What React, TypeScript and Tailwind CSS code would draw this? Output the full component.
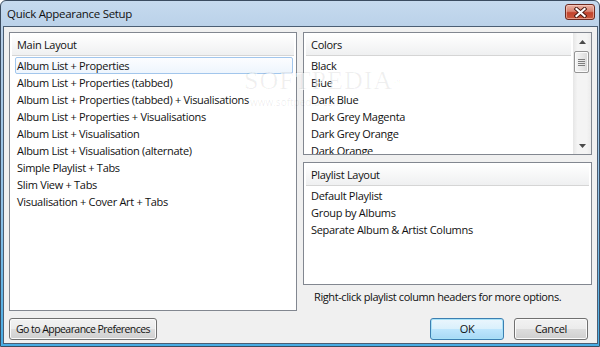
import React from "react";

const mainItems = [
  "Album List + Properties",
  "Album List + Properties (tabbed)",
  "Album List + Properties (tabbed) + Visualisations",
  "Album List + Properties + Visualisations",
  "Album List + Visualisation",
  "Album List + Visualisation (alternate)",
  "Simple Playlist + Tabs",
  "Slim View + Tabs",
  "Visualisation + Cover Art + Tabs",
];

const colorItems = [
  "Black",
  "Blue",
  "Dark Blue",
  "Dark Grey Magenta",
  "Dark Grey Orange",
  "Dark Orange",
];

const playlistItems = [
  "Default Playlist",
  "Group by Albums",
  "Separate Album & Artist Columns",
];

function Header({ label }: { label: string }) {
  return (
    <div className="mx-[2px] mt-[1px] h-[22px] shrink-0 border-b border-[#d5d5d5] bg-[linear-gradient(to_bottom,#ffffff,#eff0f1)] pl-[5px] pt-[1px] leading-[20px] text-[#111]">
      {label}
    </div>
  );
}

function Rows({ items, selected }: { items: string[]; selected?: number }) {
  return (
    <div className="mt-[1px] flex flex-col pl-[5px] pr-[3px]">
      {items.map((t, i) => (
        <div
          key={t}
          className={
            i === selected
              ? "h-[17px] shrink-0 whitespace-nowrap rounded-[2px] border border-[#a2c6ec] bg-[linear-gradient(to_bottom,#fcfdff,#eef5fd)] pl-[1px] pt-[1px] leading-[14px] text-[#111]"
              : "h-[17px] shrink-0 whitespace-nowrap rounded-[2px] border border-transparent pl-[1px] pt-[1px] leading-[14px] text-[#111]"
          }
        >
          {t}
        </div>
      ))}
    </div>
  );
}

function Scrollbar() {
  return (
    <div className="flex w-[18px] shrink-0 flex-col bg-[linear-gradient(to_right,#e6e6e6,#f4f4f4_25%,#f4f4f4_75%,#ececec)]">
      <div className="flex h-[17px] shrink-0 items-center justify-center">
        <svg width="7" height="4" viewBox="0 0 7 4">
          <path d="M3.5 0 L7 4 L0 4 Z" fill="#4a4a4a" />
        </svg>
      </div>
      <div className="ml-[1px] mt-[1px] flex h-[22px] w-[15px] shrink-0 flex-col items-center justify-center gap-[1px] rounded-[2px] border border-[#959595] bg-[linear-gradient(to_right,#f6f6f6,#e9e9e9_50%,#d9d9d9)] shadow-[inset_0_0_0_1px_#fbfbfb]">
        <div className="h-[1px] w-[7px] bg-[#7e7e7e]" />
        <div className="h-[1px] w-[7px] bg-[#7e7e7e]" />
        <div className="h-[1px] w-[7px] bg-[#7e7e7e]" />
        <div className="h-[1px] w-[7px] bg-[#7e7e7e]" />
      </div>
      <div className="flex-1" />
      <div className="flex h-[17px] shrink-0 items-center justify-center">
        <svg width="7" height="4" viewBox="0 0 7 4">
          <path d="M0 0 L7 0 L3.5 4 Z" fill="#4a4a4a" />
        </svg>
      </div>
    </div>
  );
}

const btnGray =
  "h-[22px] whitespace-nowrap rounded-[3px] border border-[#707070] bg-[linear-gradient(to_bottom,#f2f2f2_0%,#ebebeb_50%,#dddddd_50%,#cfcfcf_100%)] leading-[18px] text-[#111] shadow-[inset_0_0_0_1px_#fbfbfb]";

export default function App() {
  return (
    <div className="flex h-[347px] w-[600px] flex-col overflow-hidden rounded-t-[6px] border border-[#3b4c60] bg-[linear-gradient(to_bottom,#c6daee_0%,#b3cce6_12%,#8fc0e6_60%,#47ace4_100%)] pb-[2px] pl-[2px] pr-[1px] font-['Open_Sans',sans-serif] text-[11px] tracking-[-0.3px]">
      {/* Title bar */}
      <div className="flex h-[25px] shrink-0 items-start justify-between">
        <div className="whitespace-nowrap pl-[4px] pt-[5px] text-[11.5px] leading-[16px] text-[#111]">
          Quick Appearance Setup
        </div>
        <div className="mr-[3px] mt-[3px] flex h-[16px] w-[30px] items-center justify-center rounded-[3px] border border-[#6e2a20] bg-[linear-gradient(to_bottom,#eab3a6_0%,#d98572_45%,#c2432d_55%,#c95a3e_100%)] shadow-[inset_0_0_0_1px_rgba(255,220,210,0.5)]">
          <svg width="13" height="11" viewBox="0 0 13 11">
            <path d="M2.5 2 L10.5 9 M10.5 2 L2.5 9" stroke="#4a1a12" strokeWidth="4" strokeLinecap="square" />
            <path d="M2.5 2 L10.5 9 M10.5 2 L2.5 9" stroke="#ffffff" strokeWidth="2.2" strokeLinecap="square" />
          </svg>
        </div>
      </div>

      {/* Content */}
      <div className="relative flex flex-1 flex-col border border-[#4b5e74] bg-[#f0f0f0] pb-[2px] pl-[5px] pr-[5px] pt-[5px]">
        <div className="flex gap-[6px]">
          {/* Main Layout */}
          <div className="flex h-[279px] w-[288px] shrink-0 flex-col overflow-hidden border border-[#828790] bg-white">
            <Header label="Main Layout" />
            <Rows items={mainItems} selected={0} />
          </div>

          {/* Right column */}
          <div className="flex h-[279px] w-[289px] shrink-0 flex-col">
            <div className="flex h-[123px] shrink-0 overflow-hidden border border-[#828790] bg-white">
              <div className="flex min-w-0 flex-1 flex-col overflow-hidden">
                <Header label="Colors" />
                <Rows items={colorItems} />
              </div>
              <Scrollbar />
            </div>
            <div className="mt-[7px] flex h-[123px] shrink-0 flex-col overflow-hidden border border-[#828790] bg-white">
              <Header label="Playlist Layout" />
              <Rows items={playlistItems} />
            </div>
            <div className="mt-[4px] whitespace-nowrap pl-[11px] leading-[16px] tracking-[-0.4px] text-[#111]">
              Right-click playlist column headers for more options.
            </div>
          </div>
        </div>

        {/* Buttons */}
        <div className="mt-[7px] flex items-center pr-[4px]">
          <button className={btnGray + " w-[148px] text-[10.5px] tracking-[-0.55px]"}>
            Go to Appearance Preferences
          </button>
          <div className="flex-1" />
          <button className="h-[22px] w-[74px] whitespace-nowrap rounded-[3px] border border-[#3c7fb1] bg-[linear-gradient(to_bottom,#eaf6fd_0%,#d9f0fc_50%,#bee6fd_50%,#a7d9f5_100%)] leading-[18px] text-[#111] shadow-[inset_0_0_0_1px_#a8e2f8]">
            OK
          </button>
          <button className={btnGray + " ml-[10px] w-[74px]"}>Cancel</button>
        </div>

        {/* Watermark overlay */}
        <div className="pointer-events-none absolute left-[240px] top-[39px] flex flex-col">
          <div className="whitespace-nowrap font-['Liberation_Serif',serif] text-[26px] leading-[30px] tracking-[1px] text-[rgba(0,0,0,0.06)] [text-shadow:1px_1px_0_rgba(255,255,255,0.7)]">
            SOFTPEDIA<sup className="text-[8px]">™</sup>
          </div>
          <div className="whitespace-nowrap pl-[6px] text-[10px] leading-[12px] tracking-[0px] text-[rgba(0,0,0,0.08)]">
            www.softpedia.com
          </div>
        </div>
      </div>
    </div>
  );
}
